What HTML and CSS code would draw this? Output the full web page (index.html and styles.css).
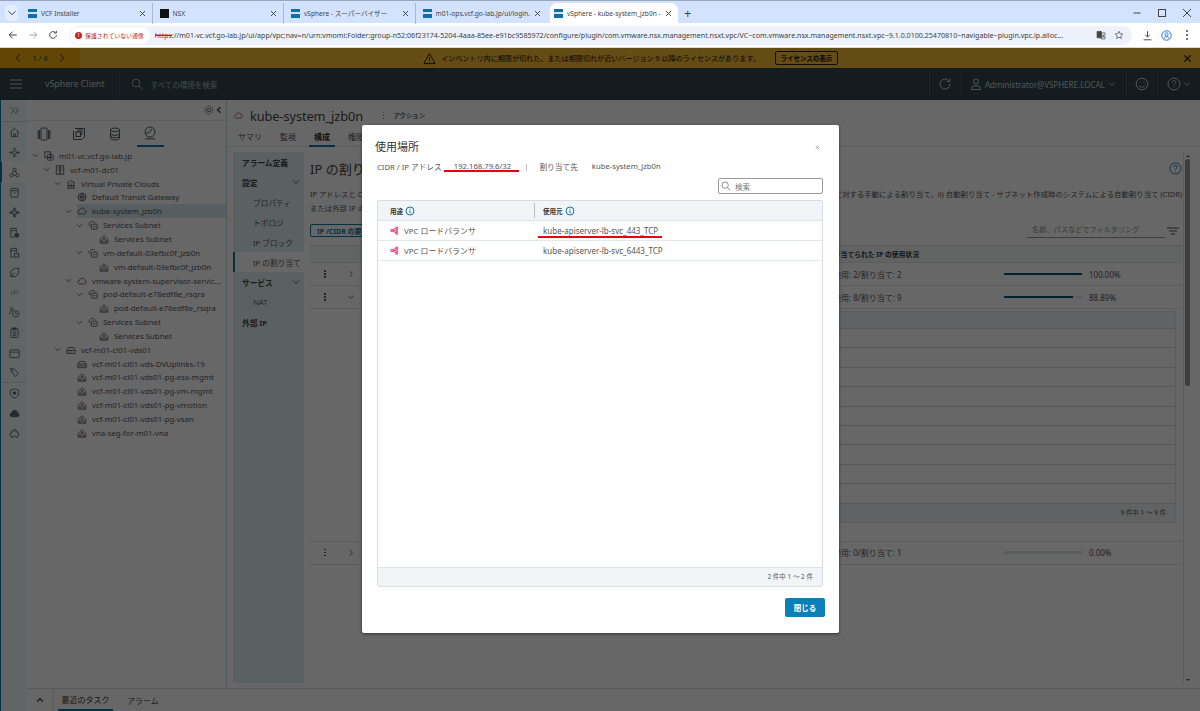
FILE: index.html
```html
<!DOCTYPE html>
<html lang="ja">
<head>
    <meta charset="UTF-8">
    <title>vSphere - kube-system_jzb0n</title>
    <link rel="stylesheet" href="styles.css">
</head>
<body>
    <svg class="defs" width="0" height="0">
        <symbol id="i-chev-down" viewBox="0 0 10 10"><path d="M1.500 3.200 5 6.800l3.500-3.600"/></symbol>
        <symbol id="i-chev-up" viewBox="0 0 10 10"><path d="M1.500 6.800 5 3.200l3.500 3.600"/></symbol>
        <symbol id="i-chev-right" viewBox="0 0 10 10"><path d="M3.200 1.500 6.800 5 3.200 8.500"/></symbol>
        <symbol id="i-chev-left" viewBox="0 0 10 10"><path d="M6.800 1.500 3.200 5l3.600 3.500"/></symbol>
        <symbol id="i-x" viewBox="0 0 10 10"><path d="m1.500 1.500 7 7M8.500 1.500l-7 7"/></symbol>
        <symbol id="i-search" viewBox="0 0 12 12"><circle cx="5" cy="5" r="3.800"/><path d="m8 8 3.400 3.400"/></symbol>
        <symbol id="i-help" viewBox="0 0 14 14"><circle cx="7" cy="7" r="6"/><path d="M5.200 5.500C5.300 4.300 6 3.700 7 3.700c1.100 0 1.900.7 1.900 1.600 0 1.500-1.900 1.400-1.900 3"/><path d="M7 9.800v.9"/></symbol>
        <symbol id="i-info" viewBox="0 0 10 10"><circle cx="5" cy="5" r="4"/><path d="M5 4.500v2.800M5 2.700v.8"/></symbol>
        <symbol id="i-vcenter" viewBox="0 0 12 12"><rect x="1" y="1" width="7" height="7"/><rect x="4" y="4" width="7" height="7" rx="1"/><circle cx="7.500" cy="7.500" r="1.500"/></symbol>
        <symbol id="i-dc" viewBox="0 0 12 12"><rect x="1.500" y="1" width="4.500" height="10"/><rect x="6" y="1" width="4.500" height="10"/><path d="M3 3.500h1.500M3 6h1.500M7.500 3.500H9M7.500 6H9"/></symbol>
        <symbol id="i-vpcs" viewBox="0 0 12 12"><path d="M1 5 6 2l5 3M3 5v6M6 5v6M9 5v6M1 8h10M1 11h10"/></symbol>
        <symbol id="i-globe" viewBox="0 0 12 12"><circle cx="6" cy="6" r="4.800"/><path d="M1.200 6h9.600M6 1.200v9.600M3.500 2.500C5 4.500 5 7.500 3.500 9.500M8.500 2.500C7 4.500 7 7.500 8.500 9.500"/></symbol>
        <symbol id="i-cloud" viewBox="0 0 12 12"><path d="M3.500 9.500C1.800 9.500 1 8.400 1 7.300c0-1.200 1-2.100 2.100-2.100C3.400 3.400 4.800 2.500 6.200 2.500c1.700 0 3 1.200 3.100 2.800 1 .2 1.700 1 1.700 2 0 1.200-1 2.200-2.200 2.200z"/></symbol>
        <symbol id="i-subnet" viewBox="0 0 12 12"><path d="M3 7C1.800 7 1 6.200 1 5.200c0-1 .8-1.700 1.700-1.700C3 2.300 4.200 1.500 5.400 1.500c1.500 0 2.600 1 2.700 2.300"/><rect x="4" y="5" width="7" height="6" rx="1"/><path d="M6 8h3"/></symbol>
        <symbol id="i-segment" viewBox="0 0 12 12"><path d="M1.500 11V6.500L6 2l4.500 4.500V11z"/><circle cx="4" cy="9" r="1"/><circle cx="8" cy="9" r="1"/><circle cx="6" cy="6" r="1"/></symbol>
        <symbol id="i-switch" viewBox="0 0 12 12"><path d="M1 6.500 3 3h6l2 3.500V10H1zM1 6.500h10"/><path d="M3 8.300h1M5.500 8.300h1"/></symbol>
        <symbol id="i-uplink" viewBox="0 0 12 12"><path d="M1 6 3 3h6l2 3v4.500H1zM1 6h10M1 8.300h10"/></symbol>
        <symbol id="i-lb" viewBox="0 0 12 12"><circle cx="2.500" cy="6" r="1.500"/><circle cx="9" cy="2.500" r="1.300"/><circle cx="9" cy="6" r="1.300"/><circle cx="9" cy="9.500" r="1.300"/><path d="M4 6h3.700M3.800 5.200 7.800 3M3.800 6.800l4 2.200"/></symbol>
    </svg>

    <div class="chrome">
        <div class="tabstrip">
            <span class="tab-menu"><svg class="ic10"><use href="#i-chev-down"/></svg></span>
            <div class="tab"><span class="favicon"></span><span class="tab-title">VCF Installer</span><svg class="tab-x"><use href="#i-x"/></svg></div>
            <div class="tab"><span class="favicon favicon-nsx"></span><span class="tab-title">NSX</span><svg class="tab-x"><use href="#i-x"/></svg></div>
            <div class="tab"><span class="favicon"></span><span class="tab-title">vSphere - スーパーバイザー</span><svg class="tab-x"><use href="#i-x"/></svg></div>
            <div class="tab tab-last"><span class="favicon"></span><span class="tab-title">m01-ops.vcf.go-lab.jp/ui/login.</span><svg class="tab-x"><use href="#i-x"/></svg></div>
            <div class="tab tab-active"><span class="favicon"></span><span class="tab-title">vSphere - kube-system_jzb0n -</span><svg class="tab-x"><use href="#i-x"/></svg></div>
            <span class="tab-new">+</span>
            <div class="win-btns">
                <svg viewBox="0 0 10 10"><path d="M1.500 5h7"/></svg>
                <svg viewBox="0 0 10 10"><rect x="1.500" y="1.500" width="7" height="7"/></svg>
                <svg viewBox="0 0 10 10"><path d="m1 1 8 8M9 1 1 9"/></svg>
            </div>
        </div>
        <div class="toolbar">
            <svg class="nav-btn" viewBox="0 0 12 12"><path d="M10.500 6h-9M5.500 2 1.500 6l4 4"/></svg>
            <svg class="nav-btn nav-off" viewBox="0 0 12 12"><path d="M1.500 6h9M6.500 2l4 4-4 4"/></svg>
            <svg class="nav-btn" viewBox="0 0 12 12"><path d="M10 6a4 4 0 1 1-1.200-2.900M10 1v2.600H7.400"/></svg>
            <div class="omnibox">
                <div class="secure"><span class="secure-dot">!</span>保護されていない通信</div>
                <div class="url"><s>https</s>://m01-vc.vcf.go-lab.jp/ui/app/vpc;nav=n/urn:vmomi:Folder:group-n52:06f23174-5204-4aaa-85ee-e91bc9585972/configure/plugin/com.vmware.nsx.management.nsxt.vpc/VC~com.vmware.nsx.management.nsxt.vpc~9.1.0.0100.25470810~navigable~plugin.vpc.ip.alloc...</div>
                <svg class="omni-ic" viewBox="0 0 14 14"><path d="M1.500 2h6v9h-6z" fill="#444"/><path d="M7.500 4h5v8.500h-5z"/><path d="M9 10.500 10 6.500l1 4"/></svg>
                <svg class="omni-ic" viewBox="0 0 14 14"><path d="m7 1.800 1.600 3.400 3.700.5-2.700 2.500.7 3.700L7 10.100l-3.300 1.800.7-3.700-2.700-2.500 3.700-.5z"/></svg>
            </div>
            <svg class="tool-ic" viewBox="0 0 14 14"><path d="M7 1.500v7M4 6l3 3 3-3M2 12.500h10"/></svg>
            <svg class="tool-ic tool-profile" viewBox="0 0 14 14"><circle cx="7" cy="7" r="6"/><circle cx="7" cy="5.500" r="2"/><path d="M3.500 11c.8-2 2-2.500 3.500-2.500s2.700.5 3.500 2.500"/></svg>
            <span class="tool-dots"></span>
        </div>
    </div>

    <div class="banner">
        <div class="pager"><svg class="ic10"><use href="#i-chev-left"/></svg><span>1 / 4</span><svg class="ic10"><use href="#i-chev-right"/></svg></div>
        <div class="banner-msg">
            <svg class="warn" viewBox="0 0 14 14"><path d="M7 1.500 13 12.500H1zM7 5.500v3.500M7 10.200v.8"/></svg>
            <span>インベントリ内に期限が切れた、または期限切れが近いバージョン 9 以降のライセンスがあります。</span>
            <button class="banner-btn">ライセンスの表示</button>
        </div>
        <svg class="banner-x"><use href="#i-x"/></svg>
    </div>

    <header class="topnav">
        <svg class="burger" viewBox="0 0 12 10"><path d="M0 1h12M0 5h12M0 9h12"/></svg>
        <span class="brand">vSphere Client</span>
        <div class="global-search"><svg class="ic12"><use href="#i-search"/></svg><span>すべての環境を検索</span></div>
        <div class="nav-cell nav-reload"><svg viewBox="0 0 14 14" class="ic14"><path d="M12 7a5 5 0 1 1-1.500-3.500M12 1.500v3H9"/></svg></div>
        <div class="nav-cell nav-user">
            <svg viewBox="0 0 12 12" class="ic12"><circle cx="6" cy="3.500" r="2.500"/><path d="M1.500 11.500v-1c0-2 2-3 4.500-3s4.500 1 4.500 3v1z"/></svg>
            <span>Administrator@VSPHERE.LOCAL</span>
            <svg class="ic8"><use href="#i-chev-down"/></svg>
        </div>
        <div class="nav-cell nav-smile"><svg viewBox="0 0 14 14" class="ic14"><circle cx="7" cy="7" r="5.800"/><path d="M4 8.500c1 2 5 2 6 0M4.800 5.300h.8M8.400 5.300h.8"/></svg></div>
        <div class="nav-cell nav-help"><svg class="ic14"><use href="#i-help"/></svg><svg class="ic8"><use href="#i-chev-down"/></svg></div>
    </header>

    <div class="app">
        <nav class="rail">
            <div class="rail-item rail-top"><svg viewBox="0 0 12 12"><path d="M2 2.500 5.500 6 2 9.500M6.500 2.500 10 6l-3.500 3.500"/></svg></div>
            <div class="rail-item"><svg viewBox="0 0 12 12"><path d="M1 6 6 1.500 11 6M2.500 5v5.500h7V5M5 10.500V7.500h2v3"/></svg></div>
            <div class="rail-item"><svg viewBox="0 0 12 12"><circle cx="6" cy="6" r="2"/><path d="M6 1v3M6 8v3M1 6h3M8 6h3"/><path d="m6 1 1.500 1.500M6 1 4.500 2.500M11 6 9.500 7.500M11 6 9.500 4.500M6 11l1.500-1.500M6 11 4.500 9.500M1 6l1.500 1.500M1 6l1.500-1.500"/></svg></div>
            <div class="rail-item rail-on"><svg viewBox="0 0 12 12"><circle cx="6" cy="3" r="1.800"/><circle cx="2.700" cy="9" r="1.800"/><circle cx="9.300" cy="9" r="1.800"/><path d="M5 4.500 3.500 7.400M7 4.500l1.500 2.900M4.500 9h3"/></svg></div>
            <div class="rail-item"><svg viewBox="0 0 12 12"><rect x="2" y="1.500" width="8" height="9.500" rx="1"/><path d="M2 4h8M5 6.500h2"/></svg></div>
            <div class="rail-item"><svg viewBox="0 0 12 12"><rect x="4.200" y="4.200" width="3.600" height="3.600"/><path d="M6 1v3.200M6 7.800V11M1 6h3.200M7.800 6H11"/><circle cx="6" cy="2" r="1"/><circle cx="6" cy="10" r="1"/><circle cx="2" cy="6" r="1"/><circle cx="10" cy="6" r="1"/></svg></div>
            <div class="rail-item"><svg viewBox="0 0 12 12"><path d="M2 11V1.500h6V6M2 4h6M2 11h4"/><circle cx="8.500" cy="9" r="2.200" fill="currentColor"/></svg></div>
            <div class="rail-item"><svg viewBox="0 0 12 12"><path d="M2 11V1.500h6V6M2 4h6M2 11h3"/><rect x="6" y="7" width="4.500" height="4"/></svg></div>
            <div class="rail-item"><svg viewBox="0 0 12 12"><path d="M2 4.500 6 1.500h4.500v5L7 10.500H2zM2 10.500 6 6"/></svg></div>
            <div class="rail-item rail-code"><svg viewBox="0 0 12 12"><path d="M3.500 3.500 1 6l2.500 2.500M8.500 3.500 11 6 8.500 8.500M6.800 3 5.200 9"/></svg></div>
            <div class="rail-item"><svg viewBox="0 0 12 12"><circle cx="3" cy="2.500" r="1.500"/><circle cx="7.500" cy="7.500" r="3.500"/><path d="M7.500 5.500v2.200h1.800M1 8V6c0-1 1-1.500 2-1.500"/></svg></div>
            <div class="rail-item"><svg viewBox="0 0 12 12"><rect x="2" y="2" width="8" height="9.500" rx=".6"/><rect x="4.300" y="1" width="3.400" height="2" fill="currentColor"/><path d="M4 5.500h4M4 7.500h4M4 9.500h4"/></svg></div>
            <div class="rail-item"><svg viewBox="0 0 12 12"><rect x="1" y="2" width="10" height="8.500" rx=".6"/><path d="M1 4.500h10"/></svg></div>
            <div class="rail-item rail-end"><svg viewBox="0 0 12 12"><path d="M1.500 3V1.500H5l5.500 5.500L7 10.500z"/><circle cx="3.700" cy="3.700" r=".6"/></svg></div>
            <div class="rail-item"><svg viewBox="0 0 12 12"><path d="M6 1 10.500 2.500V6c0 2.500-2 4.200-4.500 5C3.500 10.200 1.500 8.500 1.500 6V2.500z"/><circle cx="6" cy="5.500" r="1.500" fill="currentColor"/></svg></div>
            <div class="rail-item"><svg viewBox="0 0 12 12"><path d="M3 9.500C1.500 9.500 1 8.400 1 7.400c0-1.200 1-2.100 2-2.100C3.300 3.600 4.700 2.500 6.200 2.500c1.700 0 3 1.200 3.100 2.800 1 .2 1.700 1 1.700 2 0 1.200-1 2.200-2.200 2.200z" fill="currentColor"/></svg></div>
            <div class="rail-item"><svg viewBox="0 0 12 12"><path d="M4.500 2h3v2.200h2.300v2.100c1.600-.6 1.600 2 0 1.400v2.300H7.500c.5-1.500-3.500-1.500-3 0H2.200V7.700c-1.600.6-1.600-2 0-1.400V4.200h2.300z"/></svg></div>
        </nav>

        <div class="app-body">
            <div class="workspace">
                <aside class="tree-panel">
                    <div class="tree-head"><svg viewBox="0 0 12 12" class="ic10"><circle cx="6" cy="6" r="2"/><circle cx="6" cy="6" r="4.600" stroke-dasharray="2 .8"/></svg><svg class="ic8 bold"><use href="#i-chev-left"/></svg></div>
                    <div class="tree-tabs">
                        <span class="tree-tab"><svg viewBox="0 0 14 14"><rect x="4" y="1" width="6" height="12" rx=".8"/><path d="M1 3.500h1.500v8H1zM11.500 3.500H13v8h-1.500z"/></svg></span>
                        <span class="tree-tab"><svg viewBox="0 0 14 14"><path d="M3 1.500h9.500V10L10 12.500H1.500V4"/><rect x="4" y="5" width="4.500" height="4.500"/><path d="M6 5V3h4v4.500H8.500"/></svg></span>
                        <span class="tree-tab"><svg viewBox="0 0 14 14"><ellipse cx="7" cy="2.800" rx="4.500" ry="1.800"/><path d="M2.500 2.800v8.400c0 1 2 1.800 4.500 1.800s4.500-.8 4.500-1.800V2.800M2.500 6.500c0 1 2 1.800 4.500 1.800s4.500-.8 4.500-1.800M2.500 9c0 1 2 1.800 4.500 1.800S11.500 10 11.500 9"/></svg></span>
                        <span class="tree-tab tree-tab-on"><svg viewBox="0 0 14 14"><circle cx="7" cy="6" r="5"/><path d="M3 8c1-2 2.500-1 4-2s1-3 2-3.500M2 12.800h10"/></svg></span>
                    </div>
                    <ul class="tree">
                        <li class="lv1"><svg class="tw"><use href="#i-chev-down"/></svg><svg class="ti"><use href="#i-vcenter"/></svg><span>m01-vc.vcf.go-lab.jp</span></li>
                        <li class="lv2"><svg class="tw"><use href="#i-chev-down"/></svg><svg class="ti"><use href="#i-dc"/></svg><span>vcf-m01-dc01</span></li>
                        <li class="lv3"><svg class="tw"><use href="#i-chev-down"/></svg><svg class="ti"><use href="#i-vpcs"/></svg><span>Virtual Private Clouds</span></li>
                        <li class="lv4"><svg class="tw"></svg><svg class="ti"><use href="#i-globe"/></svg><span>Default Transit Gateway</span></li>
                        <li class="lv4 tree-on"><svg class="tw"><use href="#i-chev-down"/></svg><svg class="ti"><use href="#i-cloud"/></svg><span>kube-system_jzb0n</span></li>
                        <li class="lv5"><svg class="tw"><use href="#i-chev-down"/></svg><svg class="ti"><use href="#i-subnet"/></svg><span>Services Subnet</span></li>
                        <li class="lv6"><svg class="tw"></svg><svg class="ti"><use href="#i-segment"/></svg><span>Services Subnet</span></li>
                        <li class="lv5"><svg class="tw"><use href="#i-chev-down"/></svg><svg class="ti"><use href="#i-subnet"/></svg><span>vm-default-03efbc0f_jzb0n</span></li>
                        <li class="lv6"><svg class="tw"></svg><svg class="ti"><use href="#i-segment"/></svg><span>vm-default-03efbc0f_jzb0n</span></li>
                        <li class="lv4"><svg class="tw"><use href="#i-chev-down"/></svg><svg class="ti"><use href="#i-cloud"/></svg><span>vmware-system-supervisor-servic...</span></li>
                        <li class="lv5"><svg class="tw"><use href="#i-chev-down"/></svg><svg class="ti"><use href="#i-subnet"/></svg><span>pod-default-e78edf8e_rsqra</span></li>
                        <li class="lv6"><svg class="tw"></svg><svg class="ti"><use href="#i-segment"/></svg><span>pod-default-e78edf8e_rsqra</span></li>
                        <li class="lv5"><svg class="tw"><use href="#i-chev-down"/></svg><svg class="ti"><use href="#i-subnet"/></svg><span>Services Subnet</span></li>
                        <li class="lv6"><svg class="tw"></svg><svg class="ti"><use href="#i-segment"/></svg><span>Services Subnet</span></li>
                        <li class="lv3"><svg class="tw"><use href="#i-chev-down"/></svg><svg class="ti"><use href="#i-switch"/></svg><span>vcf-m01-cl01-vds01</span></li>
                        <li class="lv4"><svg class="tw"></svg><svg class="ti"><use href="#i-uplink"/></svg><span>vcf-m01-cl01-vds-DVUplinks-19</span></li>
                        <li class="lv4"><svg class="tw"></svg><svg class="ti"><use href="#i-segment"/></svg><span>vcf-m01-cl01-vds01-pg-esx-mgmt</span></li>
                        <li class="lv4"><svg class="tw"></svg><svg class="ti"><use href="#i-segment"/></svg><span>vcf-m01-cl01-vds01-pg-vm-mgmt</span></li>
                        <li class="lv4"><svg class="tw"></svg><svg class="ti"><use href="#i-segment"/></svg><span>vcf-m01-cl01-vds01-pg-vmotion</span></li>
                        <li class="lv4"><svg class="tw"></svg><svg class="ti"><use href="#i-segment"/></svg><span>vcf-m01-cl01-vds01-pg-vsan</span></li>
                        <li class="lv4"><svg class="tw"></svg><svg class="ti"><use href="#i-segment"/></svg><span>vna-seg-for-m01-vna</span></li>
                    </ul>
                </aside>

                <main class="main">
                    <div class="title-row">
                        <svg class="title-ic"><use href="#i-cloud"/></svg>
                        <h1>kube-system_jzb0n</h1>
                        <span class="kebab kebab-title"></span>
                        <span class="title-action">アクション</span>
                    </div>
                    <div class="main-tabs">
                        <span>サマリ</span><span>監視</span><span class="main-tab-on">構成</span><span>権限</span>
                    </div>
                    <div class="main-body">
                        <nav class="side-nav">
                            <div class="sn sn-bold">アラーム定義</div>
                            <div class="sn sn-bold">設定<svg class="ic8"><use href="#i-chev-down"/></svg></div>
                            <div class="sn sn-sub">プロパティ</div>
                            <div class="sn sn-sub">トポロジ</div>
                            <div class="sn sn-sub">IP ブロック</div>
                            <div class="sn sn-sub sn-on">IP の割り当て</div>
                            <div class="sn sn-bold">サービス<svg class="ic8"><use href="#i-chev-down"/></svg></div>
                            <div class="sn sn-sub">NAT</div>
                            <div class="sn sn-bold">外部 IP</div>
                        </nav>
                        <section class="content">
                            <div class="content-head">
                                <h2>IP の割り当て</h2>
                                <svg class="content-help"><use href="#i-help"/></svg>
                            </div>
                            <p class="desc"><span>IP アドレスと C</span><span>に対する手動による割り当て。ii) 自動割り当て - サブネット作成時のシステムによる自動割り当て (CIDR)</span></p>
                            <p class="desc">または外部 IP の</p>
                            <div class="tool-row">
                                <button class="outline-btn">IP /CIDR の要求</button>
                                <div class="filter"><span>名前、パスなどでフィルタリング</span></div>
                                <svg class="filter-ic" viewBox="0 0 12 8"><path d="M0 1h12M2 4h8M4 7h4"/></svg>
                            </div>
                            <div class="alloc-table">
                                <div class="alloc-row alloc-head"><span class="alloc-usage">割り当てられた IP の使用状況</span></div>
                                <div class="alloc-row">
                                    <span class="kebab"></span><svg class="ic8"><use href="#i-chev-right"/></svg><span></span>
                                    <span class="used">使用: 2/割り当て: 2</span>
                                    <div class="bar"><div class="bar-fill" style="width:100%"></div></div>
                                    <span class="pct">100.00%</span>
                                </div>
                                <div class="alloc-row">
                                    <span class="kebab"></span><svg class="ic8"><use href="#i-chev-down"/></svg><span></span>
                                    <span class="used">使用: 8/割り当て: 9</span>
                                    <div class="bar"><div class="bar-fill" style="width:88.89%"></div></div>
                                    <span class="pct">88.89%</span>
                                </div>
                                <div class="nested">
                                    <div class="nested-head"></div>
                                    <div class="nested-row"></div>
                                    <div class="nested-row"></div>
                                    <div class="nested-row"></div>
                                    <div class="nested-row"></div>
                                    <div class="nested-row"></div>
                                    <div class="nested-row"></div>
                                    <div class="nested-row"></div>
                                    <div class="nested-row"></div>
                                    <div class="nested-row"></div>
                                    <div class="nested-foot">9 件中 1 ～ 9 件</div>
                                </div>
                                <div class="alloc-row alloc-last">
                                    <span class="kebab"></span><svg class="ic8"><use href="#i-chev-right"/></svg><span></span>
                                    <span class="used">使用: 0/割り当て: 1</span>
                                    <div class="bar"></div>
                                    <span class="pct">0.00%</span>
                                </div>
                            </div>
                        </section>
                        <div class="scrollbar"><span class="arrow-up"></span><span class="thumb"></span><span class="arrow-down"></span></div>
                    </div>
                </main>
            </div>

            <footer class="taskbar">
                <span class="task-toggle"><svg class="ic8 bold"><use href="#i-chev-up"/></svg></span>
                <span class="task-tab task-on">最近のタスク</span>
                <span class="task-tab">アラーム</span>
            </footer>
        </div>
    </div>

    <div class="dim"></div>

    <div class="modal">
        <div class="modal-head">
            <h3>使用場所</h3>
            <svg class="modal-x"><use href="#i-x"/></svg>
        </div>
        <div class="modal-info">
            <span>CIDR / IP アドレス</span>
            <span class="ip mark">192.168.79.6/32</span>
            <span class="bar-sep">|</span>
            <span class="owner-label">割り当て先</span>
            <span class="vpc-name">kube-system_jzb0n</span>
        </div>
        <div class="modal-search"><div class="search-box"><svg class="ic10"><use href="#i-search"/></svg><span>検索</span></div></div>
        <div class="grid">
            <div class="grid-head">
                <div class="col-a">用途<svg class="info"><use href="#i-info"/></svg></div>
                <div class="col-b col-line">使用元<svg class="info"><use href="#i-info"/></svg></div>
            </div>
            <div class="grid-row">
                <div class="col-a"><svg class="lb"><use href="#i-lb"/></svg>VPC ロードバランサ</div>
                <div class="col-b"><span class="mark mark-row">kube-apiserver-lb-svc_443_TCP</span></div>
            </div>
            <div class="grid-row">
                <div class="col-a"><svg class="lb"><use href="#i-lb"/></svg>VPC ロードバランサ</div>
                <div class="col-b">kube-apiserver-lb-svc_6443_TCP</div>
            </div>
            <div class="grid-fill"></div>
            <div class="grid-foot">2 件中 1 ～ 2 件</div>
        </div>
        <div class="modal-foot"><button class="close-btn">閉じる</button></div>
    </div>
</body>
</html>
```

FILE: styles.css
```css
* { box-sizing: border-box; }

html, body {
    margin: 0;
    height: 711px;
    overflow: hidden;
}
body {
    position: relative;
    display: flex;
    flex-direction: column;
    width: 1200px;
    background: #fff;
    color: #565656;
    font-family: "Noto Sans", "Noto Sans CJK JP", sans-serif;
    font-size: 8px;
}
h1, h2, h3, p, ul { margin: 0; padding: 0; font-weight: 400; }
ul { list-style: none; }
button { font-family: inherit; cursor: pointer; }
svg { fill: none; stroke: currentColor; stroke-width: 1; flex: none; }
.defs { position: absolute; }
.ic8 { width: 8px; height: 8px; }
.ic10 { width: 10px; height: 10px; }
.ic12 { width: 12px; height: 12px; }
.ic14 { width: 14px; height: 14px; }
.bold { stroke-width: 2; }

/* browser */
.chrome { flex: none; height: 48px; color: #444; }
.tabstrip {
    display: flex;
    align-items: center;
    height: 23px;
    padding-top: 2px;
    background: #d3e3fd;
    border-top: 1px solid #9aa7bb;
}
.tab-menu {
    display: flex;
    align-items: center;
    justify-content: center;
    width: 13px;
    height: 16px;
    margin: 0 3px 0 5px;
    background: #e4eefe;
    border-radius: 5px;
}
.tab {
    display: flex;
    align-items: center;
    width: 131.500px;
    height: 21px;
    padding: 0 6px 0 7px;
    border-right: 1px solid #a9b8cf;
    font-size: 6.600px;
}
.tab-last { border-right: 0; }
.tab-active {
    width: 128px;
    margin-left: 3px;
    padding-left: 4px;
    background: #fff;
    border-right: 0;
    border-radius: 7px 7px 0 0;
}
.favicon {
    flex: none;
    width: 9px;
    height: 9px;
    margin-right: 4px;
    background: linear-gradient(#0f6fa8 35%, #cfe4f2 35%, #cfe4f2 55%, #0f6fa8 55%);
}
.favicon-nsx { background: #111; }
.tab-title { flex: 1; min-width: 0; overflow: hidden; white-space: nowrap; }
.tab-x { width: 7px; height: 7px; margin-left: 4px; stroke-width: 1.400; }
.tab-new { margin-left: 6px; font-size: 13px; line-height: 1; }
.win-btns {
    display: flex;
    gap: 15px;
    margin-left: auto;
    padding-right: 8px;
}
.win-btns svg { width: 10px; height: 10px; }

.toolbar {
    display: flex;
    align-items: center;
    height: 25px;
    padding-left: 3px;
    background: #fff;
    border-bottom: 1px solid #d9d9d9;
}
.nav-btn { width: 10px; height: 10px; margin: 0 5px; stroke-width: 1.200; }
.nav-off { color: #aaa; }
.omnibox {
    display: flex;
    align-items: center;
    width: 1063px;
    height: 19px;
    margin-left: 6px;
    background: #edf2fa;
    border-radius: 10px;
}
.secure {
    display: flex;
    align-items: center;
    flex: none;
    height: 17px;
    margin-left: 1px;
    padding: 0 6px 0 5px;
    background: #fff;
    border-radius: 9px;
    color: #b3261e;
    font-size: 5.900px;
    white-space: nowrap;
}
.secure-dot {
    width: 7px;
    height: 7px;
    margin-right: 3px;
    background: #c5221f;
    border-radius: 50%;
    color: #fff;
    font-size: 6px;
    line-height: 7px;
    text-align: center;
}
.url {
    flex: 1;
    min-width: 0;
    margin-left: 5px;
    overflow: hidden;
    color: #3c4043;
    font-size: 7.100px;
    white-space: nowrap;
}
.url s { color: #c5221f; }
.omni-ic { width: 10px; height: 10px; margin-left: 8px; }
.omni-ic:last-child { margin-right: 8px; }
.tool-ic { width: 11px; height: 11px; margin-left: 10px; stroke-width: 1.200; }
.tool-profile { margin-left: 8px; color: #1a73e8; }
.tool-dots {
    width: 2px;
    height: 2px;
    margin-left: 14px;
    background: #444;
    border-radius: 50%;
    box-shadow: 0 -4px #444, 0 4px #444;
}

/* app header */
.banner {
    display: flex;
    align-items: center;
    flex: none;
    height: 20px;
    background: #fbbc33;
    color: #111;
    font-size: 7.100px;
}
.pager {
    display: flex;
    align-items: center;
    justify-content: space-between;
    width: 80px;
    height: 100%;
    padding: 0 13px;
    background: #f1ad0e;
    color: #333;
}
.banner-msg {
    display: flex;
    align-items: center;
    margin-left: 343px;
}
.warn { width: 13px; height: 13px; margin-right: 5px; }
.banner-btn {
    width: 63px;
    height: 14px;
    margin-left: 15px;
    padding: 0;
    background: transparent;
    border: 1px solid #222;
    border-radius: 2px;
    color: #111;
    font-size: 6.500px;
    font-weight: 700;
}
.banner-x { width: 9px; height: 9px; margin-left: auto; margin-right: 8px; stroke-width: 1.300; }

.topnav {
    display: flex;
    align-items: center;
    flex: none;
    height: 32px;
    background: #33474f;
    color: #c8d0d4;
}
.burger { width: 12px; height: 10px; margin-left: 10px; }
.brand { margin-left: 23px; font-size: 8.800px; white-space: nowrap; }
.global-search {
    display: flex;
    align-items: center;
    gap: 8px;
    height: 100%;
    margin-left: 14px;
    padding-left: 11px;
    border-left: 1px solid #41565f;
    font-size: 7.500px;
    opacity: .8;
}
.nav-cell {
    display: flex;
    align-items: center;
    height: 24px;
    border-left: 1px solid #41565f;
}
.nav-reload { margin-left: auto; padding: 0 8px; }
.nav-user { gap: 3px; width: 166px; padding-left: 9px; font-size: 8px; white-space: nowrap; }
.nav-smile { padding: 0 8px; }
.nav-help { gap: 2px; width: 43px; padding-left: 9px; }

/* workspace */
.app { display: flex; flex: 1; min-height: 0; }
.app-body { display: flex; flex-direction: column; flex: 1; min-width: 0; }
.workspace { display: flex; flex: 1; min-height: 0; }
.rail {
    flex: none;
    width: 27px;
    background: #f2f9fc;
    border-left: 1px solid #0c77a8;
}
.rail-item {
    display: flex;
    align-items: center;
    justify-content: center;
    height: 20.100px;
    color: #5f6a70;
}
.rail-item svg { width: 11px; height: 11px; }
.rail-top { height: 22px; border-bottom: 1px solid #d5dde0; }
.rail-on { position: relative; background: #fff; }
.rail-on::before {
    content: "";
    position: absolute;
    left: -1px;
    top: 0;
    bottom: 0;
    width: 2px;
    background: #0c77a8;
}
.rail-code svg { width: 9px; height: 9px; }
.rail-end { border-bottom: 1px solid #d5dde0; }

.tree-panel {
    flex: none;
    width: 200px;
    border-right: 1px solid #c8d4d8;
}
.tree-head {
    display: flex;
    align-items: center;
    justify-content: flex-end;
    gap: 1px;
    height: 21px;
    padding-right: 3px;
    border-bottom: 1px solid #e5e5e5;
}
.tree-tabs {
    display: flex;
    gap: 8px;
    height: 26px;
    padding-left: 3px;
    color: #505a60;
}
.tree-tab {
    display: flex;
    align-items: center;
    justify-content: center;
    width: 27.500px;
    height: 26px;
}
.tree-tab svg { width: 14px; height: 14px; }
.tree-tab-on { border-bottom: 2px solid #0c77a8; }
.tree { padding-top: 2px; }
.tree li {
    display: flex;
    align-items: center;
    height: 13.850px;
    font-size: 7.800px;
    white-space: nowrap;
}
.tree li span { min-width: 0; overflow: hidden; padding-right: 5px; }
.tw { width: 7px; height: 7px; margin-right: 5.500px; stroke-width: 1.200; }
.ti { width: 10px; height: 10px; margin-right: 5px; }
.lv1 { padding-left: 4.500px; }
.lv2 { padding-left: 15.500px; }
.lv3 { padding-left: 26.500px; }
.lv4 { padding-left: 37.500px; }
.lv5 { padding-left: 48.500px; }
.lv6 { padding-left: 59.500px; }
.tree-on { background: linear-gradient(90deg, transparent 50px, #d6e8f0 50px); }

.main { display: flex; flex-direction: column; flex: 1; min-width: 0; }
.title-row {
    display: flex;
    align-items: center;
    height: 27px;
    padding: 4px 0 0 7px;
}
.title-ic { width: 9px; height: 9px; margin-right: 7px; }
h1 { font-size: 12.800px; color: #444; white-space: nowrap; letter-spacing: -.1px; }
.kebab {
    display: block;
    width: 1.500px;
    height: 1.500px;
    background: #444;
    border-radius: 50%;
    box-shadow: 0 -3px #444, 0 3px #444;
}
.kebab-title { margin-left: 20px; }
.title-action { margin-left: 9px; font-size: 6.400px; font-weight: 700; color: #5c6f78; }
.main-tabs {
    display: flex;
    height: 20px;
    padding-left: 11px;
    border-bottom: 1px solid #e5e5e5;
    font-size: 8px;
    line-height: 20px;
}
.main-tabs span { margin-right: 18px; }
.main-tab-on { position: relative; color: #333; font-weight: 700; }
.main-tab-on::after {
    content: "";
    position: absolute;
    left: -5px;
    right: -5px;
    bottom: -1px;
    height: 2px;
    background: #0c77a8;
}

.main-body {
    display: flex;
    flex: 1;
    min-height: 0;
    padding: 5px 0 5px 6px;
}
.side-nav {
    flex: none;
    width: 71px;
    background: #e2f0f5;
}
.sn {
    display: flex;
    align-items: center;
    justify-content: space-between;
    height: 20px;
    padding: 0 4px 0 9px;
    white-space: nowrap;
    font-size: 7.700px;
}
.sn-bold { color: #444; font-weight: 700; }
.sn-sub { padding-left: 20px; padding-right: 0; }
.sn-on { position: relative; background: #fff; }
.sn-on::before {
    content: "";
    position: absolute;
    left: 0;
    top: 0;
    bottom: 0;
    width: 2px;
    background: #0c77a8;
}

.content { flex: 1; min-width: 0; padding-left: 6px; }
.content-head {
    display: flex;
    align-items: center;
    justify-content: space-between;
    height: 32px;
}
h2 { font-size: 13px; color: #444; }
.content-help { width: 13px; height: 13px; color: #0c77a8; }
.desc {
    display: flex;
    justify-content: space-between;
    height: 14px;
    line-height: 14px;
    color: #565656;
    font-size: 7.400px;
    white-space: nowrap;
}
.desc:first-of-type { margin-top: 3px; }
.tool-row {
    display: flex;
    align-items: center;
    height: 15px;
    margin-top: 8px;
}
.outline-btn {
    height: 13px;
    padding: 0 6px;
    background: #fff;
    border: 1px solid #0c77a8;
    border-radius: 2px;
    color: #0c77a8;
    font-size: 7px;
    font-weight: 700;
}
.filter {
    width: 138px;
    height: 15px;
    margin-left: auto;
    padding-left: 5px;
    border-bottom: 1px solid #9a9a9a;
    color: #8a8a8a;
    font-size: 7.200px;
    line-height: 13px;
}
.filter-ic { width: 12px; height: 8px; margin: 0 3px 0 2px; }

.alloc-table {
    margin-top: 7px;
    border-top: 1px solid #e0e0e0;
}
.alloc-row {
    display: grid;
    grid-template-columns: 30px 22px 465px 177px 78px auto;
    align-items: center;
    justify-items: start;
    height: 23px;
    border-bottom: 1px solid #e3e3e3;
    white-space: nowrap;
}
.alloc-row svg, .alloc-row .kebab { justify-self: center; }
.alloc-head {
    height: 17px;
    background: #f3f5f6;
    font-size: 6.800px;
    font-weight: 700;
    color: #333;
}
.alloc-usage { grid-column: 4 / 7; }
.used { padding-left: 6px; }
.alloc-last { height: 24px; margin-top: 18px; border-top: 1px solid #e3e3e3; }
.bar { width: 100%; height: 2.500px; background: #dfe5e8; }
.bar-fill { height: 100%; background: #00567f; }
.pct { margin-left: 7px; }
.nested {
    margin: 2px 6px 0 70px;
    border: 1px solid #e3e3e3;
    border-radius: 2px;
}
.nested-head { height: 17px; background: #f1f3f4; border-bottom: 1px solid #dcdcdc; }
.nested-row { height: 19.400px; border-bottom: 1px solid #dcdcdc; }
.nested-foot {
    height: 18px;
    padding-right: 9px;
    background: #f1f3f4;
    font-size: 6.500px;
    line-height: 18px;
    text-align: right;
}

.scrollbar {
    display: flex;
    flex-direction: column;
    align-items: center;
    flex: none;
    width: 8px;
    margin: 0 9px 0 1px;
    border-left: 1px solid #e0e0e0;
}
.arrow-up, .arrow-down { width: 0; height: 0; margin-top: 3px; border: 2px solid transparent; }
.arrow-up { border-top: 0; border-bottom-color: #555; }
.arrow-down { margin-top: auto; margin-bottom: 2px; border-bottom: 0; border-top-color: #555; }
.thumb {
    width: 5px;
    height: 227px;
    margin-top: 2px;
    background: #9a9a9a;
    border-radius: 3px;
}

.taskbar {
    display: flex;
    align-items: stretch;
    flex: none;
    height: 23px;
    background: #fff;
    border-top: 1px solid #dcdcdc;
    font-size: 8px;
    white-space: nowrap;
}
.task-toggle {
    display: flex;
    align-items: center;
    justify-content: center;
    width: 26px;
    border-right: 1px solid #e4e4e4;
}
.task-tab {
    display: flex;
    align-items: center;
    margin-left: 14px;
}
.task-on {
    justify-content: center;
    width: 55px;
    margin-left: 5px;
    color: #333;
    border-bottom: 2px solid #0c77a8;
}

/* dialog over the dimmed page */
.dim {
    position: absolute;
    left: 0;
    right: 0;
    top: 48px;
    bottom: 0;
    background: rgba(0, 0, 0, .595);
}
.modal {
    position: absolute;
    left: 362px;
    top: 125px;
    display: flex;
    flex-direction: column;
    width: 477px;
    height: 508px;
    padding: 0 16px 0 15px;
    background: #fff;
    border-radius: 2px;
    box-shadow: 0 1px 3px rgba(0, 0, 0, .5);
    color: #565656;
}
.modal-head {
    display: flex;
    align-items: center;
    justify-content: space-between;
    height: 33px;
    margin-left: -2px;
}
h3 { font-size: 11px; color: #333; padding-top: 9px; }
.modal-x { width: 5px; height: 5px; margin-top: 11px; margin-right: 3px; color: #666; }
.modal-info {
    display: flex;
    align-items: center;
    height: 16px;
    font-size: 7.700px;
    white-space: nowrap;
}
.ip { margin-left: 12px; }
.bar-sep { margin-left: 13px; color: #888; }
.owner-label { margin-left: 11px; }
.vpc-name { margin-left: 14px; }
.mark { position: relative; }
.mark::after {
    content: "";
    position: absolute;
    left: -10px;
    right: -8px;
    bottom: -1px;
    height: 2px;
    background: #e60012;
}
.mark-row::after { left: -5px; right: -4px; bottom: -2px; }
.modal-search {
    display: flex;
    justify-content: flex-end;
    height: 26px;
    padding-top: 4px;
}
.search-box {
    display: flex;
    align-items: center;
    gap: 4px;
    width: 105px;
    height: 16px;
    padding-left: 2px;
    border: 1px solid #9a9a9a;
    border-radius: 2px;
    color: #777;
    font-size: 7.500px;
}
.grid {
    display: flex;
    flex-direction: column;
    height: 387px;
    border: 1px solid #d7dfe3;
    border-radius: 2px;
}
.grid-head {
    display: flex;
    align-items: center;
    flex: none;
    height: 20px;
    background: #f1f5f8;
    border-bottom: 1px solid #dce3e7;
    font-size: 6.500px;
    font-weight: 700;
    color: #333;
}
.col-a {
    display: flex;
    align-items: center;
    flex: none;
    width: 156px;
    padding-left: 12px;
}
.col-b { flex: 1; padding-left: 8px; }
.col-line {
    display: flex;
    align-items: center;
    height: 15px;
    border-left: 1px solid #b8c0c4;
}
.info { width: 10px; height: 10px; margin-left: 2px; color: #0c77a8; }
.grid-row {
    display: flex;
    align-items: center;
    flex: none;
    height: 20px;
    border-bottom: 1px solid #e3e8eb;
    font-size: 8px;
    white-space: nowrap;
}
.grid-row .col-a { font-size: 7.900px; }
.grid-row .col-b { padding-left: 9px; }
.lb { width: 9px; height: 9px; margin-right: 5px; color: #ee4b8a; stroke-width: 1.400; }
.grid-fill { flex: 1; }
.grid-foot {
    flex: none;
    height: 19px;
    padding-right: 9px;
    background: #f1f5f8;
    border-top: 1px solid #dce3e7;
    font-size: 6.500px;
    line-height: 18px;
    text-align: right;
}
.modal-foot {
    display: flex;
    justify-content: flex-end;
    padding-top: 11px;
}
.close-btn {
    width: 40px;
    height: 19px;
    margin-right: -2px;
    padding: 0;
    background: #0a7fb8;
    border: 0;
    border-radius: 2px;
    color: #fff;
    font-size: 7.500px;
    font-weight: 700;
}
```
